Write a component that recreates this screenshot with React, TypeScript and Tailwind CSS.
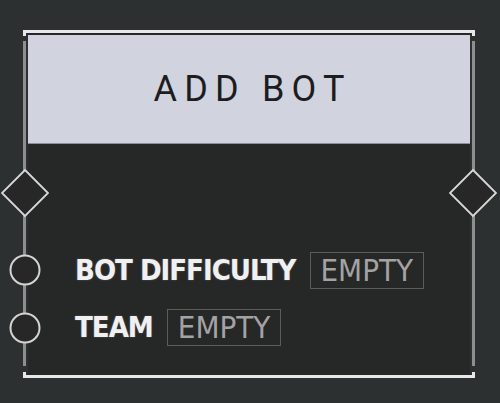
import React from 'react'

const labelFont = { fontFamily: '"DejaVu Sans Condensed", "DejaVu Sans", Roboto, sans-serif' }

const Diamond = ({ className }: { className: string }) => (
  <svg width="48" height="48" viewBox="0 0 48 48" className={className}>
    <polygon points="24,1 47,24 24,47 1,24" fill="#272727" stroke="#d9d9d9" strokeWidth="1.8" />
  </svg>
)

const Circle = ({ className }: { className: string }) => (
  <svg width="32" height="32" viewBox="0 0 32 32" className={className}>
    <circle cx="16" cy="16" r="14.5" fill="#272727" stroke="#d4d4d4" strokeWidth="2" />
  </svg>
)

const Field = ({ label }: { label: string }) => (
  <div className="flex items-center gap-[14px]">
    <span
      className="text-[29px] leading-none font-bold tracking-[-1px] text-[#f0f0f0] [text-shadow:0_0_2px_rgba(255,255,255,0.25)]"
      style={labelFont}
    >
      {label}
    </span>
    <span
      className="h-[37px] flex items-center px-[10px] border border-[#5c5c5c] text-[31px] leading-none text-[#a3a3a3]"
      style={labelFont}
    >
      EMPTY
    </span>
  </div>
)

export default function App() {
  return (
    <div className="w-[500px] h-[403px] bg-[#2c3030] pt-[30px] pl-[23px] overflow-hidden">
      <div className="relative w-[452px] flex flex-col">
        {/* top edge */}
        <div className="h-[3px] bg-[#e8e8e8]" />

        <div className="flex h-[342px]">
          {/* left rail */}
          <div className="w-[5px] flex flex-col">
            <div className="w-[3px] h-[3px] bg-[#e8e8e8]" />
            <div className="w-[3px] flex-1 mt-[5px] mb-[6px] bg-[#8d8f8f]" />
            <div className="w-[3px] h-[3px] bg-[#e8e8e8]" />
          </div>

          {/* body */}
          <div className="w-[442px] bg-[#262727] pt-[2px] flex flex-col">
            <div className="h-[109px] bg-[#d1d4de] border-b border-[#8e9096] flex items-center justify-center">
              <span
                className="text-[36px] leading-none tracking-[0.2em] pl-[0.2em] text-[#1c1d1f]"
                style={{ fontFamily: 'Roboto, "DejaVu Sans", sans-serif' }}
              >
                ADD BOT
              </span>
            </div>
            <div className="pt-[108px] pl-[47px] flex flex-col gap-[20px]">
              <Field label="BOT DIFFICULTY" />
              <Field label="TEAM" />
            </div>
          </div>

          {/* right rail */}
          <div className="w-[5px] flex flex-col items-end">
            <div className="w-[3px] h-[3px] bg-[#e8e8e8]" />
            <div className="w-[3px] flex-1 mt-[5px] mb-[6px] bg-[#8d8f8f]" />
            <div className="w-[3px] h-[3px] bg-[#e8e8e8]" />
          </div>
        </div>

        {/* bottom edge */}
        <div className="h-[3px] bg-[#e8e8e8]" />

        {/* ports */}
        <Diamond className="absolute left-[-22px] top-[139px]" />
        <Diamond className="absolute left-[426px] top-[139px]" />
        <Circle className="absolute left-[-14px] top-[224px]" />
        <Circle className="absolute left-[-14px] top-[282px]" />
      </div>
    </div>
  )
}
